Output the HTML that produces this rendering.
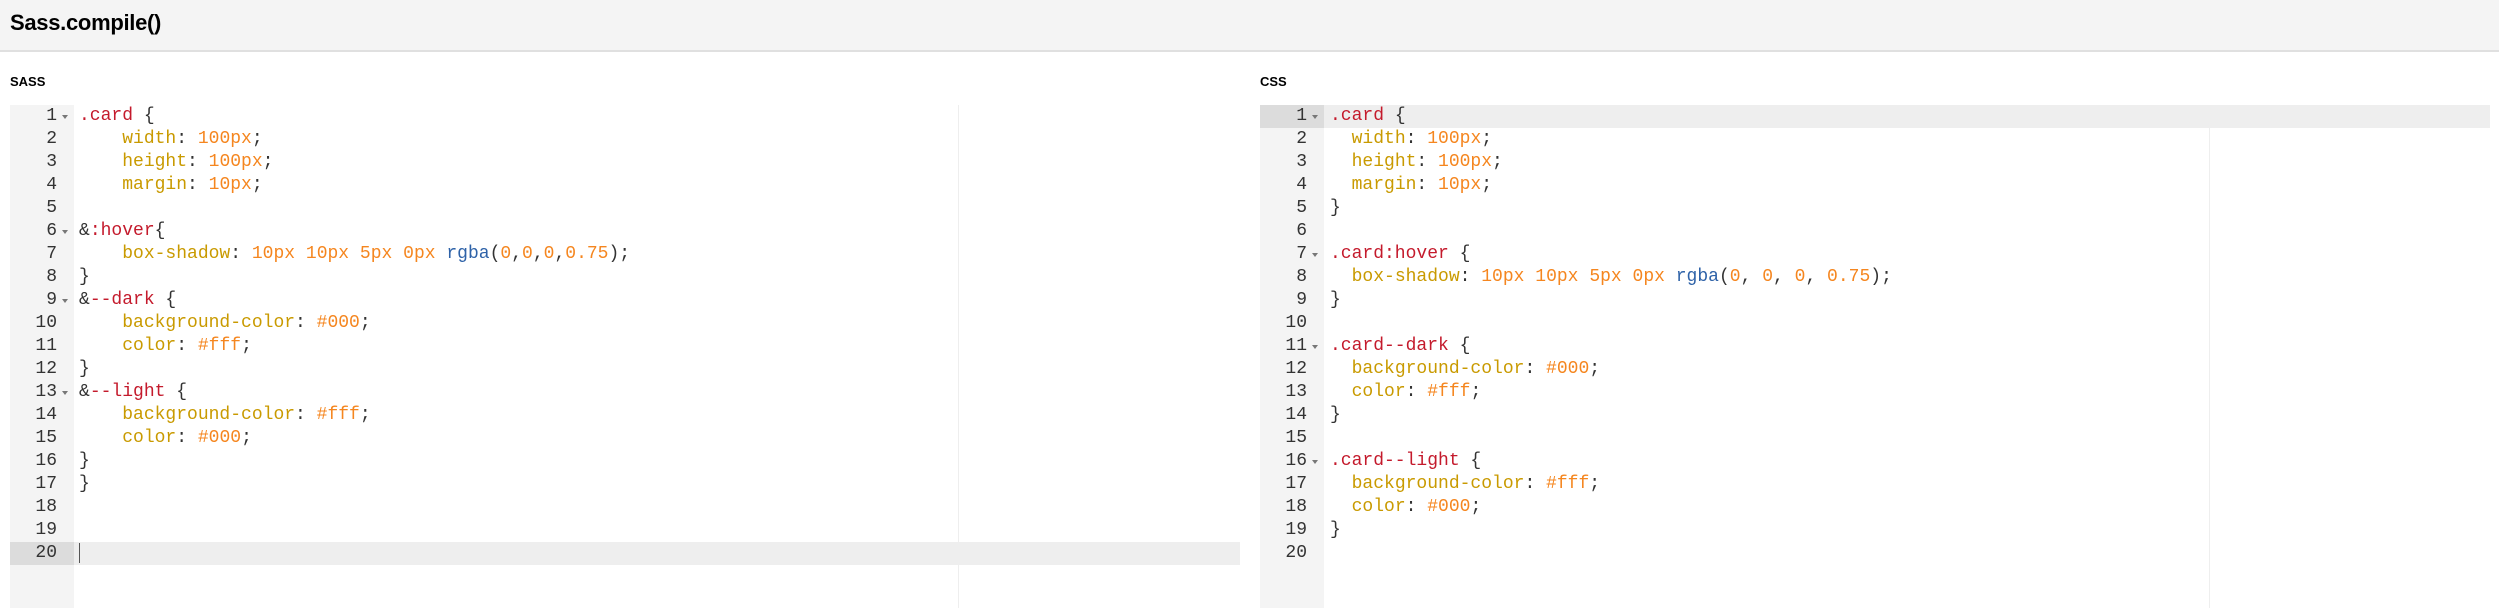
<!DOCTYPE html>
<html><head><meta charset="utf-8"><style>
*{margin:0;padding:0;box-sizing:border-box}
body{width:2499px;height:608px;overflow:hidden;background:#fff;position:relative;font-family:"Liberation Sans",sans-serif}
.hdr{position:absolute;left:0;top:0;width:2499px;height:52px;background:#f4f4f4;border-bottom:2px solid #e0e0e0}
.hdr h1{position:absolute;left:10px;top:10px;font-size:22px;font-weight:bold;color:#000;letter-spacing:-0.3px}
.lbl{position:absolute;top:74px;font-size:13px;font-weight:bold;color:#000}
.ed{position:absolute;top:105px;height:503px;font-family:"Liberation Mono",monospace;font-size:18px;line-height:23px}
.gut{position:absolute;left:0;top:0;width:64px;height:100%;background:#f4f4f4}
.ln{height:23px;text-align:right;padding-right:17px;color:#333;position:relative}
.ln.f::after{content:"";position:absolute;right:6px;top:10px;border-left:3px solid transparent;border-right:3px solid transparent;border-top:4px solid #777}
.code{position:absolute;left:70px;top:0;right:0}
.l{height:23px;white-space:pre;color:#333}
.pm{position:absolute;top:0;height:100%;width:1px;background:#eee}
.act{position:absolute;height:23px;background:#eeeeee}
.actg{position:absolute;height:23px;background:#dcdcdc}
.s{color:#c41a2c}.p{color:#c99a00}.n{color:#f5861f}.b{color:#2e62a8}
</style></head><body>
<div class="hdr"><h1>Sass.compile()</h1></div>
<div class="lbl" style="left:10px">SASS</div>
<div class="lbl" style="left:1260px">CSS</div>

<div class="ed" style="left:10px;width:1230px">
<div class="pm" style="left:948px"></div>
<div class="act" style="left:64px;right:0;top:437px"></div>
<div class="gut"><div class="actg" style="left:0;width:64px;top:437px"></div>
<div style="position:relative">
<div class="ln f">1</div><div class="ln">2</div><div class="ln">3</div><div class="ln">4</div><div class="ln">5</div><div class="ln f">6</div><div class="ln">7</div><div class="ln">8</div><div class="ln f">9</div><div class="ln">10</div><div class="ln">11</div><div class="ln">12</div><div class="ln f">13</div><div class="ln">14</div><div class="ln">15</div><div class="ln">16</div><div class="ln">17</div><div class="ln">18</div><div class="ln">19</div><div class="ln">20</div>
</div></div>
<div class="code" style="left:69px">
<div class="l"><span class="s">.card</span> {</div>
<div class="l">    <span class="p">width</span>: <span class="n">100px</span>;</div>
<div class="l">    <span class="p">height</span>: <span class="n">100px</span>;</div>
<div class="l">    <span class="p">margin</span>: <span class="n">10px</span>;</div>
<div class="l"> </div>
<div class="l">&amp;<span class="s">:hover</span>{</div>
<div class="l">    <span class="p">box-shadow</span>: <span class="n">10px</span> <span class="n">10px</span> <span class="n">5px</span> <span class="n">0px</span> <span class="b">rgba</span>(<span class="n">0</span>,<span class="n">0</span>,<span class="n">0</span>,<span class="n">0.75</span>);</div>
<div class="l">}</div>
<div class="l">&amp;<span class="s">--dark</span> {</div>
<div class="l">    <span class="p">background-color</span>: <span class="n">#000</span>;</div>
<div class="l">    <span class="p">color</span>: <span class="n">#fff</span>;</div>
<div class="l">}</div>
<div class="l">&amp;<span class="s">--light</span> {</div>
<div class="l">    <span class="p">background-color</span>: <span class="n">#fff</span>;</div>
<div class="l">    <span class="p">color</span>: <span class="n">#000</span>;</div>
<div class="l">}</div>
<div class="l">}</div>
<div class="l"> </div>
<div class="l"> </div>
<div class="l"><span style="border-left:1px solid #555"> </span></div>
</div>
</div>

<div class="ed" style="left:1260px;width:1230px">
<div class="pm" style="left:949px"></div>
<div class="act" style="left:64px;right:0;top:0"></div>
<div class="gut"><div class="actg" style="left:0;width:64px;top:0"></div>
<div style="position:relative">
<div class="ln f">1</div><div class="ln">2</div><div class="ln">3</div><div class="ln">4</div><div class="ln">5</div><div class="ln">6</div><div class="ln f">7</div><div class="ln">8</div><div class="ln">9</div><div class="ln">10</div><div class="ln f">11</div><div class="ln">12</div><div class="ln">13</div><div class="ln">14</div><div class="ln">15</div><div class="ln f">16</div><div class="ln">17</div><div class="ln">18</div><div class="ln">19</div><div class="ln">20</div>
</div></div>
<div class="code">
<div class="l"><span class="s">.card</span> {</div>
<div class="l">  <span class="p">width</span>: <span class="n">100px</span>;</div>
<div class="l">  <span class="p">height</span>: <span class="n">100px</span>;</div>
<div class="l">  <span class="p">margin</span>: <span class="n">10px</span>;</div>
<div class="l">}</div>
<div class="l"> </div>
<div class="l"><span class="s">.card:hover</span> {</div>
<div class="l">  <span class="p">box-shadow</span>: <span class="n">10px</span> <span class="n">10px</span> <span class="n">5px</span> <span class="n">0px</span> <span class="b">rgba</span>(<span class="n">0</span>, <span class="n">0</span>, <span class="n">0</span>, <span class="n">0.75</span>);</div>
<div class="l">}</div>
<div class="l"> </div>
<div class="l"><span class="s">.card--dark</span> {</div>
<div class="l">  <span class="p">background-color</span>: <span class="n">#000</span>;</div>
<div class="l">  <span class="p">color</span>: <span class="n">#fff</span>;</div>
<div class="l">}</div>
<div class="l"> </div>
<div class="l"><span class="s">.card--light</span> {</div>
<div class="l">  <span class="p">background-color</span>: <span class="n">#fff</span>;</div>
<div class="l">  <span class="p">color</span>: <span class="n">#000</span>;</div>
<div class="l">}</div>
<div class="l"> </div>
</div>
</div>
</body></html>
